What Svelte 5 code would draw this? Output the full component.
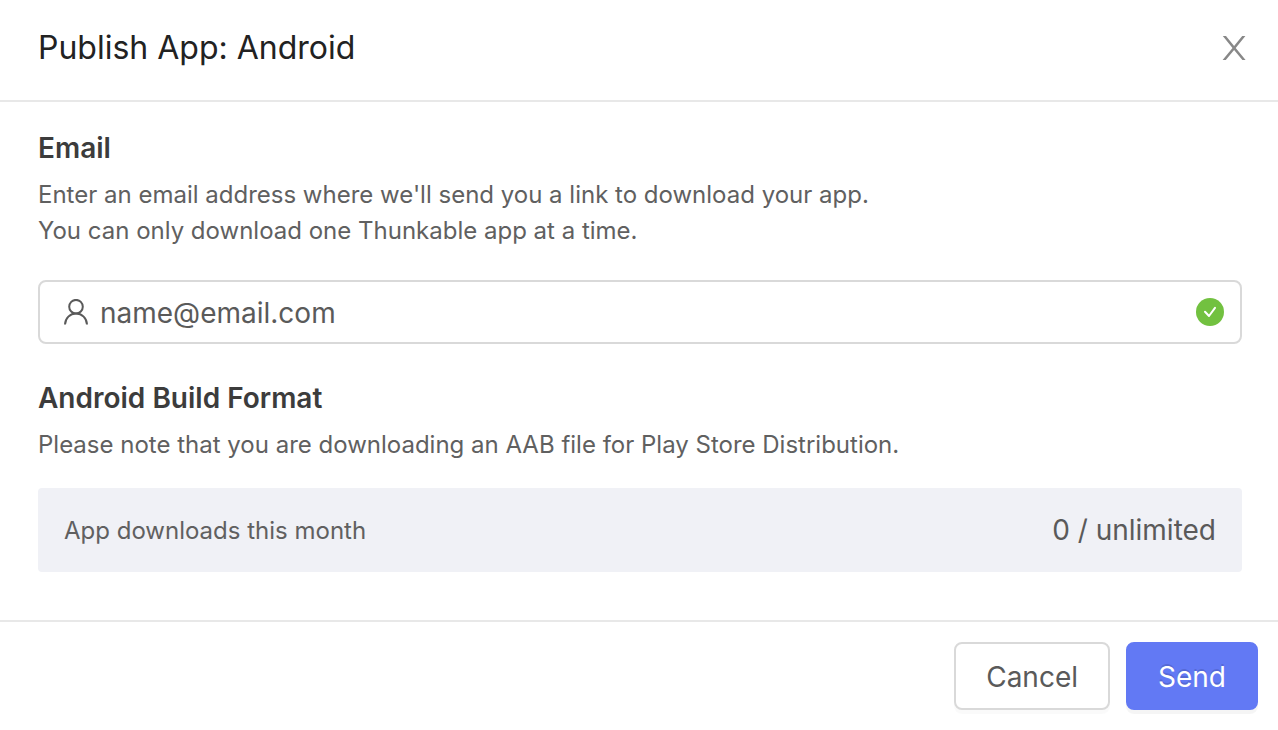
<script>
  let email = $state('name@email.com');
</script>

<div class="dialog" role="dialog" aria-labelledby="title">
  <header>
    <h1 id="title">Publish App: Android</h1>
    <button class="close" aria-label="Close">
      <svg width="24" height="24" viewBox="0 0 24 24"><path d="M.8 0H4l8.100 9.900L20.200 0h3.200L13.700 11.900 23.600 24h-3.200l-8.300-10.100L3.800 24H.6l9.900-12.100z" /></svg>
    </button>
  </header>
  <main>
    <section>
      <h2><label for="email">Email</label></h2>
      <p>Enter an email address where we'll send you a link to download your app.<br />You can only download one Thunkable app at a time.</p>
      <div class="field">
        <svg class="user" width="26" height="26" viewBox="0 0 26 26"><circle cx="13" cy="7.700" r="6.800" /><path d="M2 25.500C2.300 19.200 7 14.500 13 14.500s10.700 4.700 11 11" /></svg>
        <input id="email" type="email" bind:value={email} />
        <svg width="28" height="28" viewBox="0 0 28 28"><circle cx="14" cy="14" r="14" fill="#72c140" /><path class="tick" d="M9 13.800l4 4.200L19 9.800" /></svg>
      </div>
    </section>
    <section>
      <h2>Android Build Format</h2>
      <p>Please note that you are downloading an AAB file for Play Store Distribution.</p>
      <div class="usage"><span>App downloads this month</span><strong>0 / unlimited</strong></div>
    </section>
  </main>
  <footer>
    <button class="btn">Cancel</button>
    <button class="btn primary">Send</button>
  </footer>
</div>

<style>
  :global(body) { margin: 0; background: #fff; }
  .dialog { font-family: Inter, "Liberation Sans", sans-serif; color: #606060; }
  header { display: flex; justify-content: space-between; align-items: center; padding: 26px 32px 30px 38px; border-bottom: 2px solid #e8e8e8; }
  h1 { margin: 0; font-size: 32px; line-height: 44px; font-weight: 400; color: #222; }
  button { font-family: inherit; cursor: pointer; }
  .close { display: flex; padding: 0; border: 0; background: none; }
  .close path { fill: #888; }
  main { padding: 28px 36px 48px 38px; }
  section + section { margin-top: 36px; }
  h2 { margin: 0 0 11px; font-size: 28px; line-height: 36px; font-weight: 600; color: #3c3c3c; }
  p { margin: 0; font-size: 24px; line-height: 36px; }
  .field { display: flex; align-items: center; box-sizing: border-box; height: 64px; margin-top: 31px; padding: 0 16px 0 23px; border: 2px solid #d9d9d9; border-radius: 8px; }
  .user { fill: none; stroke: #5a5a5a; stroke-width: 2px; }
  .tick { fill: none; stroke: #fff; stroke-width: 2px; stroke-linecap: round; stroke-linejoin: round; }
  input { flex: 1; min-width: 0; padding: 2px 0 0 11px; border: 0; outline: 0; background: none; font: inherit; font-size: 28px; color: #5a5a5a; }
  .usage { display: flex; justify-content: space-between; align-items: center; height: 84px; margin-top: 25px; padding: 0 26px; border-radius: 4px; background: #f0f1f6; font-size: 24px; }
  .usage strong { font-size: 28px; font-weight: 400; color: #5a5a5a; }
  footer { display: flex; justify-content: flex-end; gap: 16px; padding: 20px; border-top: 2px solid #e8e8e8; }
  .btn { height: 68px; padding: 2px 30px 0; border: 2px solid #d9d9d9; border-radius: 8px; background: #fff; font-size: 28px; color: #5a5a5a; box-shadow: 0 4px 0 rgba(0, 0, 0, .02); }
  .primary { border-color: #6279f4; background: #6279f4; color: #fff; text-shadow: 0 -2px 0 rgba(0, 0, 0, .12); box-shadow: 0 4px 0 rgba(0, 0, 0, .04); }
</style>
